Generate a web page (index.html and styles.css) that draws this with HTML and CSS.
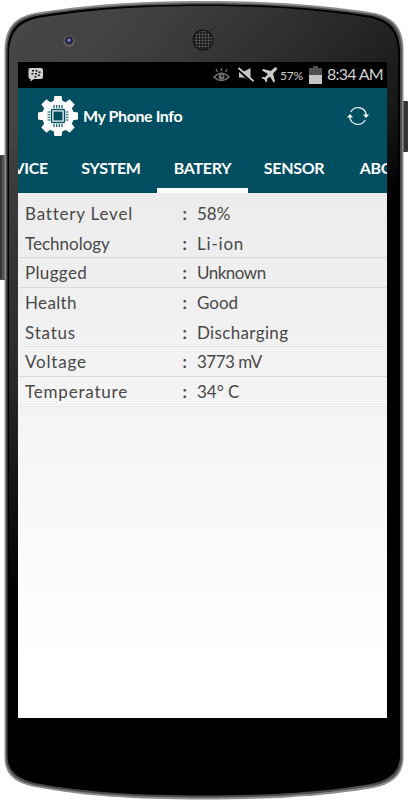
FILE: index.html
```html
<!DOCTYPE html>
<html lang="en">
<head>
<meta charset="utf-8">
<title>My Phone Info</title>
<link rel="stylesheet" href="styles.css">
</head>
<body>
<div class="phone">
  <svg class="shell" width="408" height="800" viewBox="0 0 408 800" aria-hidden="true">
    <defs>
      <linearGradient id="face" x1="0" y1="0" x2="408" y2="360" gradientUnits="userSpaceOnUse">
        <stop offset="0" stop-color="#494748"/><stop offset=".2" stop-color="#434142"/><stop offset=".5" stop-color="#2a2929"/><stop offset=".68" stop-color="#171717"/><stop offset=".78" stop-color="#000"/><stop offset="1" stop-color="#000"/>
      </linearGradient>
      <linearGradient id="side" x1="0" y1="150" x2="0" y2="600" gradientUnits="userSpaceOnUse">
        <stop offset="0" stop-color="#403e3e"/><stop offset=".5" stop-color="#2b2a2a"/><stop offset="1" stop-color="#000"/>
      </linearGradient>
      <linearGradient id="key" x1="0" x2="1">
        <stop offset="0" stop-color="#242527"/><stop offset=".35" stop-color="#55585a"/><stop offset="1" stop-color="#242424"/>
      </linearGradient>
      <pattern id="mesh" width="3" height="3" patternUnits="userSpaceOnUse"><rect width="3" height="3" fill="#171717"/><circle cx="1.5" cy="1.5" r="1" fill="#6a6969"/></pattern>
    </defs>
    <rect x="0" y="155" width="8" height="125" rx="1" fill="url(#key)"/>
    <rect x="401" y="101" width="7" height="51" rx="1" fill="#353535"/>
    <path d="M4.500 50C5 27 15 17 35 13C83 5 135 1 204 1S325 5 375 13C394 18 403 27 403.500 50V758C403 775 393 784 373 788C325 796 275 799.500 204 799.500S83 796 35 787C15 783 5 775 4.500 758Z" fill="#8b8d8d"/>
    <path d="M6 50C7 28 16 18 36 14.500C84 7 135 3 204 3S324 7 374 14.500C393 19 401 28 402 50V758C401 774 392 782 372 786C324 794 275 797.500 204 797.500S84 794 36 785.500C16 781 7 774 6 758Z" fill="#4d4d4d"/>
    <path d="M7.500 51C8 30 17 20 37 16C85 8 136 4.500 204 4.500S323 8 372 16C391 21 399 30 400 51V757C399 772 390 780 371 784C323 792 274 795.500 204 795.500S85 792 37 783.500C17 779 8 771 7.500 757Z" fill="#000"/>
    <path d="M9 52C10 32 19 22 38 18C86 10 136 6 204 6S322 10 371 18C390 23 397 32 398 52V200H9Z" fill="url(#face)"/>
    <path d="M9 150H18V650H9Z" fill="url(#side)"/>
    <circle cx="69" cy="41" r="5.500" fill="#6c6a6b"/><circle cx="69" cy="40.500" r="4.300" fill="#282631"/><circle cx="69" cy="40.500" r="2.300" fill="#42419a"/><circle cx="69" cy="40" r=".9" fill="#b3b4e0"/>
    <circle cx="203" cy="40" r="10.500" fill="#111"/><circle cx="203" cy="40" r="9.300" fill="url(#mesh)"/>
  </svg>

  <main class="screen">
    <div class="status">
      <svg class="chat" width="16" height="16" viewBox="0 0 16 16"><path d="M2 1H13Q15 1 15 3V10Q15 12 13 12H6L2.500 14.500V12Q.5 12 .5 10V3Q.5 1 2 1Z" fill="#d0d0d0"/><path d="M4 3h2v1.500h-2zM7.500 3h2v1.500h-2zM3.500 6h2v1.500h-2zM7 6h2v1.500h-2zM10.500 4.500h2v1.500h-2zM10 7.500h2v1.500h-2zM6.500 9h2v1.500h-2z" fill="#151515"/></svg>
      <svg class="eye" width="17" height="16" viewBox="0 0 17 16" fill="none" stroke="#6d6d6d"><path d="M1 10Q8.500 2.500 16 10Q8.500 17 1 10Z" stroke-width="1.600"/><circle cx="8.500" cy="9.700" r="2.600" fill="#6d6d6d"/><circle cx="9" cy="9" r=".9" fill="#000" stroke="none"/><path d="M8.500 1V4M3 2L4.500 5M14 2L12.500 5" stroke-width="1.400"/></svg>
      <svg class="mute" width="16" height="16" viewBox="0 0 16 16"><path d="M1 4.500H6L12.500 1V14.500L6 10.500H1Z" fill="#c6c6c6"/><path d="M0 2L14 15" stroke="#000" stroke-width="3"/><path d="M.5 1L15.500 14" stroke="#d0d0d0" stroke-width="1.700"/></svg>
      <svg class="plane" width="17" height="16" viewBox="0 0 17 16"><path d="M15.500.5Q17 1.500 15.500 3L12 6.500L14 14.500L12.500 15.500L9 9.500L6 12L6.200 14.500L5 15.500L3.500 12.500L.5 11L1.500 10L4 10.200L7 7L1 3.500L2 2L9.800 4L13.500.8Q14.500 0 15.500.5Z" fill="#ccc"/></svg>
      <span class="percent">57%</span>
      <svg class="cell" width="13" height="18" viewBox="0 0 13 18"><path d="M4 0H9V2H13V9H0V2H4Z" fill="#505050"/><path d="M0 9H13V18H0Z" fill="#c5c5c5"/></svg>
      <span class="clock">8:34 AM</span>
    </div>
    <header class="header">
      <div class="bar">
        <svg class="logo" width="40" height="40" viewBox="-20 -20 40 40">
          <g fill="#fff"><circle r="15.800"/><g id="teeth"><path id="tooth" d="M-4.500-14L-3.600-20H3.600L4.500-14Z"/><use href="#tooth" transform="rotate(45)"/><use href="#tooth" transform="rotate(90)"/><use href="#tooth" transform="rotate(135)"/></g><use href="#teeth" transform="rotate(180)"/></g>
          <g fill="none" stroke="#004e5f"><rect x="-6.500" y="-6.500" width="13" height="13" rx="1" stroke-width="1.500"/><path d="M-4-8V-11M-1.300-8V-11M1.300-8V-11M4-8V-11M-4 8V11M-1.300 8V11M1.300 8V11M4 8V11M-8-4H-10.500M-8-1.300H-10.500M-8 1.300H-10.500M-8 4H-10.500M8-4H10.500M8-1.300H10.500M8 1.300H10.500M8 4H10.500" stroke-width="1.100"/></g><rect x="-4.500" y="-4.500" width="9" height="9" fill="#004e5f"/>
        </svg>
        <h1 class="title">My Phone Info</h1>
        <svg class="refresh" width="22" height="20" viewBox="0 0 22 20"><g fill="none" stroke="#d9e8eb" stroke-width="1.400"><path d="M3.800 6A8.200 8.200 0 0 1 19.200 9M18.200 14A8.200 8.200 0 0 1 2.800 11"/></g><path d="M16 8.500H22L19 12ZM0 11.500L3 8L6 11.500Z" fill="#fff"/></svg>
      </div>
      <nav class="tabs">
        <span class="tab device">DEVICE</span><span class="tab system">SYSTEM</span><span class="tab battery">BATERY</span><span class="tab sensor">SENSOR</span><span class="tab about">ABOUT</span>
      </nav>
    </header>
    <section class="list">
      <div class="row"><span class="wider">Battery Level</span><i>:</i><span>58%</span></div>
      <div class="row line"><span>Technology</span><i>:</i><span class="wider">Li-ion</span></div>
      <div class="row line"><span class="wide">Plugged</span><i>:</i><span class="tight">Unknown</span></div>
      <div class="row"><span class="wide">Health</span><i>:</i><span>Good</span></div>
      <div class="row faint"><span class="wider">Status</span><i>:</i><span class="wide">Discharging</span></div>
      <div class="row line"><span class="wider">Voltage</span><i>:</i><span class="tight">3773 mV</span></div>
      <div class="row faint"><span class="wider">Temperature</span><i>:</i><span>34° C</span></div>
    </section>
  </main>
</div>
</body>
</html>
```
FILE: styles.css
```css
* { box-sizing: border-box; }
body { margin: 0; background: #fff; font-family: Lato, "Open Sans", sans-serif; }
.phone { position: relative; width: 408px; height: 800px; padding: 62px 21px 82px 18px; overflow: hidden; }
.shell { position: absolute; inset: 0; }
.screen { position: relative; width: 369px; height: 656px; overflow: hidden; display: flex; flex-direction: column; background: linear-gradient(#ececec 22%, #fff 92%); }
.status { height: 26px; flex: none; background: #000; color: #d0d0d0; display: flex; align-items: center; padding-left: 10px; }
.status svg { flex: none; }
.eye { margin-left: 169px; }
.mute { margin-left: 8px; }
.plane { margin-left: 7px; }
.percent { width: 24px; margin-left: 2px; font-size: 12px; letter-spacing: -0.2px; white-space: nowrap; }
.cell { margin-left: 5px; }
.clock { margin-left: 5px; font-size: 16px; line-height: 22px; letter-spacing: -0.75px; white-space: nowrap; padding-bottom: 2px; }
.header { height: 105px; flex: none; background: #004e5f; color: #fff; display: flex; flex-direction: column; }
.bar { height: 56px; padding: 0 18px 0 20px; display: flex; align-items: center; }
.title { margin: 0 0 2px 5px; font-size: 16px; font-weight: 700; letter-spacing: -0.42px; flex: 1; }
.tabs { height: 49px; display: grid; grid-template-columns: 47px 92px 91px 92px 91px; grid-template-rows: 49px; font-size: 16px; font-weight: 700; line-height: 48px; letter-spacing: -0.3px; }
.tab { text-align: center; white-space: nowrap; }
.device { display: flex; justify-content: flex-end; padding-right: 17px; }
.about { padding-left: 3px; }
.battery { border-bottom: 5px solid #fff; }
.list { padding-top: 5.900px; color: #484848; }
.row { height: 29.700px; display: grid; grid-template-columns: 157.500px 14.500px 1fr; grid-template-rows: 28.700px; padding-left: 7px; font-size: 17px; line-height: 30px; border-bottom: 1px solid transparent; white-space: nowrap; }
.row span { justify-self: start; }
.row i { font-style: normal; font-weight: 700; }
.row .wide { letter-spacing: 0.35px; }
.row .wider { letter-spacing: 0.8px; }
.row .tight { letter-spacing: -0.5px; }
.line { border-bottom-color: #dadada; }
.faint { border-bottom-color: #e9e9e9; }
```
